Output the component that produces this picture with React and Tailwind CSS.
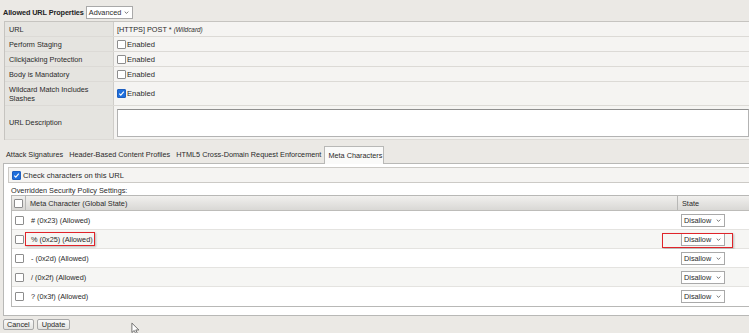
import React from "react";

const Check = ({ checked }) =>
  checked ? (
    <span className="w-[9px] h-[9px] bg-[#1f6fdc] border border-[#1f5fbf] rounded-[1px] flex items-center justify-center shrink-0">
      <svg viewBox="0 0 10 10" className="w-[7px] h-[7px]">
        <path d="M1.8 5.2 L4 7.4 L8.3 2.4" fill="none" stroke="#fff" strokeWidth="1.6" />
      </svg>
    </span>
  ) : (
    <span className="w-[9px] h-[9px] bg-white border border-[#8d8d8d] rounded-[1px] shrink-0" />
  );

const Select = ({ label, className = "" }) => (
  <span
    className={`h-[13px] bg-white border border-[#a9a9a9] flex items-center justify-between pl-[2px] pr-[3px] ${className}`}
  >
    <span>{label}</span>
    <svg viewBox="0 0 8 5" className="w-[5px] h-[3px]">
      <path d="M1 1 L4 4 L7 1" fill="none" stroke="#444" strokeWidth="1.2" />
    </svg>
  </span>
);

const props = [
  { label: "URL", h: "h-[15px]", value: "url" },
  { label: "Perform Staging", h: "h-[15px]", value: false },
  { label: "Clickjacking Protection", h: "h-[15px]", value: false },
  { label: "Body is Mandatory", h: "h-[15px]", value: false },
  { label: "Wildcard Match Includes Slashes", h: "h-[24px]", value: true },
  { label: "URL Description", h: "h-[34px]", value: "text" },
];

const metaRows = [
  "# (0x23) (Allowed)",
  "% (0x25) (Allowed)",
  "- (0x2d) (Allowed)",
  "/ (0x2f) (Allowed)",
  "? (0x3f) (Allowed)",
];

export default function App() {
  return (
    <div className="w-[749px] h-[333px] bg-[#ebe9e5] relative overflow-hidden font-['Liberation_Sans',Arial,sans-serif] text-[7.3px] leading-[9px] text-[#2a2a2a]">
      {/* Header */}
      <div className="h-[21px] flex items-center pt-[4px] pl-[3px] gap-[2px]">
        <span className="font-bold text-[#222] tracking-[-0.1px]">Allowed URL Properties</span>
        <Select label="Advanced" className="w-[47px]" />
      </div>

      {/* Properties table */}
      <div className="ml-[4px] border-t border-l border-[#c6c4c0]">
        {props.map((p) => (
          <div key={p.label} className={`flex ${p.h} border-b border-[#dcdad6]`}>
            <div className="w-[109px] bg-[#e5e4e0] border-r border-[#cfcdc9] flex items-center pl-[4px] pr-[8px]">
              {p.label}
            </div>
            <div className="flex-1 bg-[#f5f4f2] flex items-center pl-[3px]">
              {p.value === "url" && (
                <span>
                  [HTTPS] POST * <i className="text-[6.4px]">(Wildcard)</i>
                </span>
              )}
              {typeof p.value === "boolean" && (
                <span className="flex items-center gap-[1px]">
                  <Check checked={p.value} />
                  <span className="text-[7.6px]">Enabled</span>
                </span>
              )}
              {p.value === "text" && (
                <div className="flex-1 h-[28px] bg-white border border-[#b3b3b3] border-t-[#8f8f8f]" />
              )}
            </div>
          </div>
        ))}
      </div>

      {/* Tabs */}
      <div className="mt-[6px] ml-[3px] h-[18px] flex items-end border-b border-[#b8b8b6]">
        <div className="flex items-center h-[17px] gap-[6px] pl-[3px] pr-[3px]">
          <span>Attack Signatures</span>
          <span>Header-Based Content Profiles</span>
          <span>HTML5 Cross-Domain Request Enforcement</span>
        </div>
        <div className="h-[18px] -mb-px w-[60px] bg-[#fafaf9] border border-b-0 border-[#b8b8b6] flex items-center pl-[3px]">
          Meta Characters
        </div>
      </div>

      {/* Panel */}
      <div className="ml-[3px] h-[152px] bg-white border-l border-b border-[#b8b8b6] pt-[3px] pl-[4px]">
        <div className="h-[16px] bg-[#f5f4f2] border border-r-0 border-[#cccac6] flex items-center pl-[3px] gap-[2px]">
          <Check checked />
          <span className="text-[7.6px]">Check characters on this URL</span>
        </div>
        <div className="pl-[3px] h-[12px] flex items-end">Overridden Security Policy Settings:</div>

        <div className="ml-[3px] border border-r-0 border-[#b8b8b6]">
          <div className="flex h-[15px] bg-gradient-to-b from-[#f1f0ee] to-[#d9d8d5] border-b border-[#bdbcb9]">
            <div className="w-[14px] border-r border-[#b8b8b6] flex items-center justify-center">
              <Check checked={false} />
            </div>
            <div className="flex-1 flex items-center pl-[4px]">Meta Character (Global State)</div>
            <div className="w-[72px] border-l border-[#b8b8b6] flex items-center pl-[4px]">State</div>
          </div>
          {metaRows.map((r, i) => (
            <div
              key={r}
              className={`relative flex h-[19px] border-b border-[#e4e3e0] last:border-b-0 ${
                i % 2 === 1 ? "bg-[#f6f6f4]" : "bg-white"
              }`}
            >
              <div className="w-[14px] flex items-center justify-center">
                <Check checked={false} />
              </div>
              <div className="flex-1 flex items-center pl-[5px]">{r}</div>
              <div className="w-[72px] flex items-center pl-[4px]">
                <Select label="Disallow" className="w-[44px]" />
              </div>
              {i === 1 && (
                <>
                  <span className="absolute left-[13px] top-[2px] w-[70px] h-[14px] border-[1.5px] border-[#e0242a] shadow-[1px_1px_2px_rgba(0,0,0,0.25)]" />
                  <span className="absolute right-[16px] top-[3px] w-[71px] h-[15px] border-[1.5px] border-[#e0242a] shadow-[1px_1px_2px_rgba(0,0,0,0.25)]" />
                </>
              )}
            </div>
          ))}
        </div>
      </div>

      {/* Buttons */}
      <div className="flex gap-[3px] pl-[3px] pt-[3px]">
        <button className="h-[11px] px-[3px] bg-gradient-to-b from-[#fafafa] to-[#e3e3e1] border border-[#a8a8a8] rounded-[2px] flex items-center">
          Cancel
        </button>
        <button className="h-[11px] px-[4px] bg-gradient-to-b from-[#fafafa] to-[#e3e3e1] border border-[#a8a8a8] rounded-[2px] flex items-center">
          Update
        </button>
      </div>

      {/* Mouse pointer */}
      <svg viewBox="0 0 10 14" className="absolute left-[131px] top-[322px] w-[9px] h-[13px]">
        <path d="M1 1 L1 11.5 L3.6 9.2 L5.4 13 L7 12.3 L5.3 8.6 L8.7 8.6 Z" fill="#fff" stroke="#444" strokeWidth="0.8" strokeLinejoin="round" />
      </svg>
    </div>
  );
}
